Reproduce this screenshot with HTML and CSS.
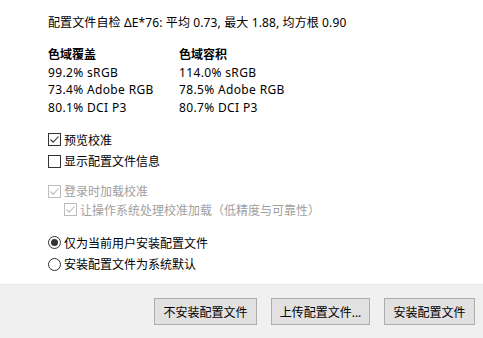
FILE: index.html
```html
<!DOCTYPE html>
<html lang="zh-CN">
<head>
    <meta charset="UTF-8">
    <title>安装配置文件</title>
    <link rel="stylesheet" href="styles.css">
</head>
<body>
    <div class="content">
        <p class="summary">配置文件自检 ΔE*76: 平均 0.73, 最大 1.88, 均方根 0.90</p>

        <div class="gamut">
            <div class="gamut-col coverage">
                <p class="heading">色域覆盖</p>
                <p>99.2% sRGB</p>
                <p>73.4% Adobe RGB</p>
                <p>80.1% DCI P3</p>
            </div>
            <div class="gamut-col">
                <p class="heading">色域容积</p>
                <p>114.0% sRGB</p>
                <p>78.5% Adobe RGB</p>
                <p>80.7% DCI P3</p>
            </div>
        </div>

        <div class="group">
            <label class="option">
                <span class="box checked">
                    <svg viewBox="0 0 13 13" width="13" height="13"><path d="M2.5 6.5 L5.2 9.2 L10.5 3.5" fill="none" stroke="#333" stroke-width="1.1"/></svg>
                </span>
                预览校准
            </label>
            <label class="option">
                <span class="box"></span>
                显示配置文件信息
            </label>
        </div>

        <div class="group disabled">
            <label class="option">
                <span class="box checked">
                    <svg viewBox="0 0 13 13" width="13" height="13"><path d="M2.5 6.5 L5.2 9.2 L10.5 3.5" fill="none" stroke="#bcbcbc" stroke-width="1.1"/></svg>
                </span>
                登录时加载校准
            </label>
            <label class="option sub">
                <span class="box checked">
                    <svg viewBox="0 0 13 13" width="13" height="13"><path d="M2.5 6.5 L5.2 9.2 L10.5 3.5" fill="none" stroke="#bcbcbc" stroke-width="1.1"/></svg>
                </span>
                让操作系统处理校准加载（低精度与可靠性）
            </label>
        </div>

        <div class="group radios">
            <label class="option">
                <span class="radio selected"></span>
                仅为当前用户安装配置文件
            </label>
            <label class="option">
                <span class="radio"></span>
                安装配置文件为系统默认
            </label>
        </div>
    </div>

    <div class="footer">
        <button class="btn">不安装配置文件</button>
        <button class="btn">上传配置文件...</button>
        <button class="btn">安装配置文件</button>
    </div>
</body>
</html>
```

FILE: styles.css
```css
body {
    margin: 0;
    background: #ffffff;
    font-family: "Noto Sans", "Noto Sans CJK SC", sans-serif;
    font-size: 12px;
    color: #000;
    width: 483px;
    height: 338px;
    overflow: hidden;
}

p {
    margin: 0;
}

.content {
    height: 284px;
    padding-left: 48px;
    box-sizing: border-box;
    padding-top: 14px;
}

.summary {
    line-height: 18px;
    letter-spacing: 0.12px;
}

.gamut {
    display: flex;
    margin-top: 14px;
}

.gamut-col p {
    line-height: 17.5px;
    letter-spacing: 0.35px;
}

.gamut-col p.heading {
    letter-spacing: 0;
}

.gamut-col.coverage {
    width: 131px;
}

.heading {
    font-weight: bold;
}

.group {
    margin-top: 13px;
}

.option {
    display: flex;
    align-items: center;
    height: 21.5px;
    gap: 3px;
}

.box {
    width: 13px;
    height: 13px;
    box-sizing: border-box;
    border: 1px solid #333;
    background: #fff;
    position: relative;
    flex-shrink: 0;
}

.box svg {
    position: absolute;
    left: -1px;
    top: -1px;
}

.disabled {
    margin-top: 10px;
    color: #a0a0a0;
}

.disabled .option {
    height: 18.5px;
}

.disabled .box {
    border-color: #bcbcbc;
}

.option.sub {
    padding-left: 16px;
}

.radios {
    margin-top: 13px;
}

.radio {
    width: 13px;
    height: 13px;
    box-sizing: border-box;
    border: 1px solid #333;
    border-radius: 50%;
    background: #fff;
    display: flex;
    align-items: center;
    justify-content: center;
    flex-shrink: 0;
}

.radio.selected::after {
    content: "";
    width: 7px;
    height: 7px;
    border-radius: 50%;
    background: #333;
}

.footer {
    height: 54px;
    background: #f0f0f0;
    border-top: 1px solid #e6e6e6;
    box-sizing: border-box;
    display: flex;
    justify-content: flex-end;
    align-items: flex-start;
    gap: 14px;
    padding: 13px 8px 0 0;
}

.btn {
    font-family: inherit;
    font-size: 12px;
    height: 27px;
    padding: 0;
    background: #e1e1e1;
    border: 1px solid #adadad;
    color: #000;
}

.btn:nth-child(1) {
    width: 103px;
}

.btn:nth-child(2) {
    width: 99px;
}

.btn:nth-child(3) {
    width: 91px;
}
```
